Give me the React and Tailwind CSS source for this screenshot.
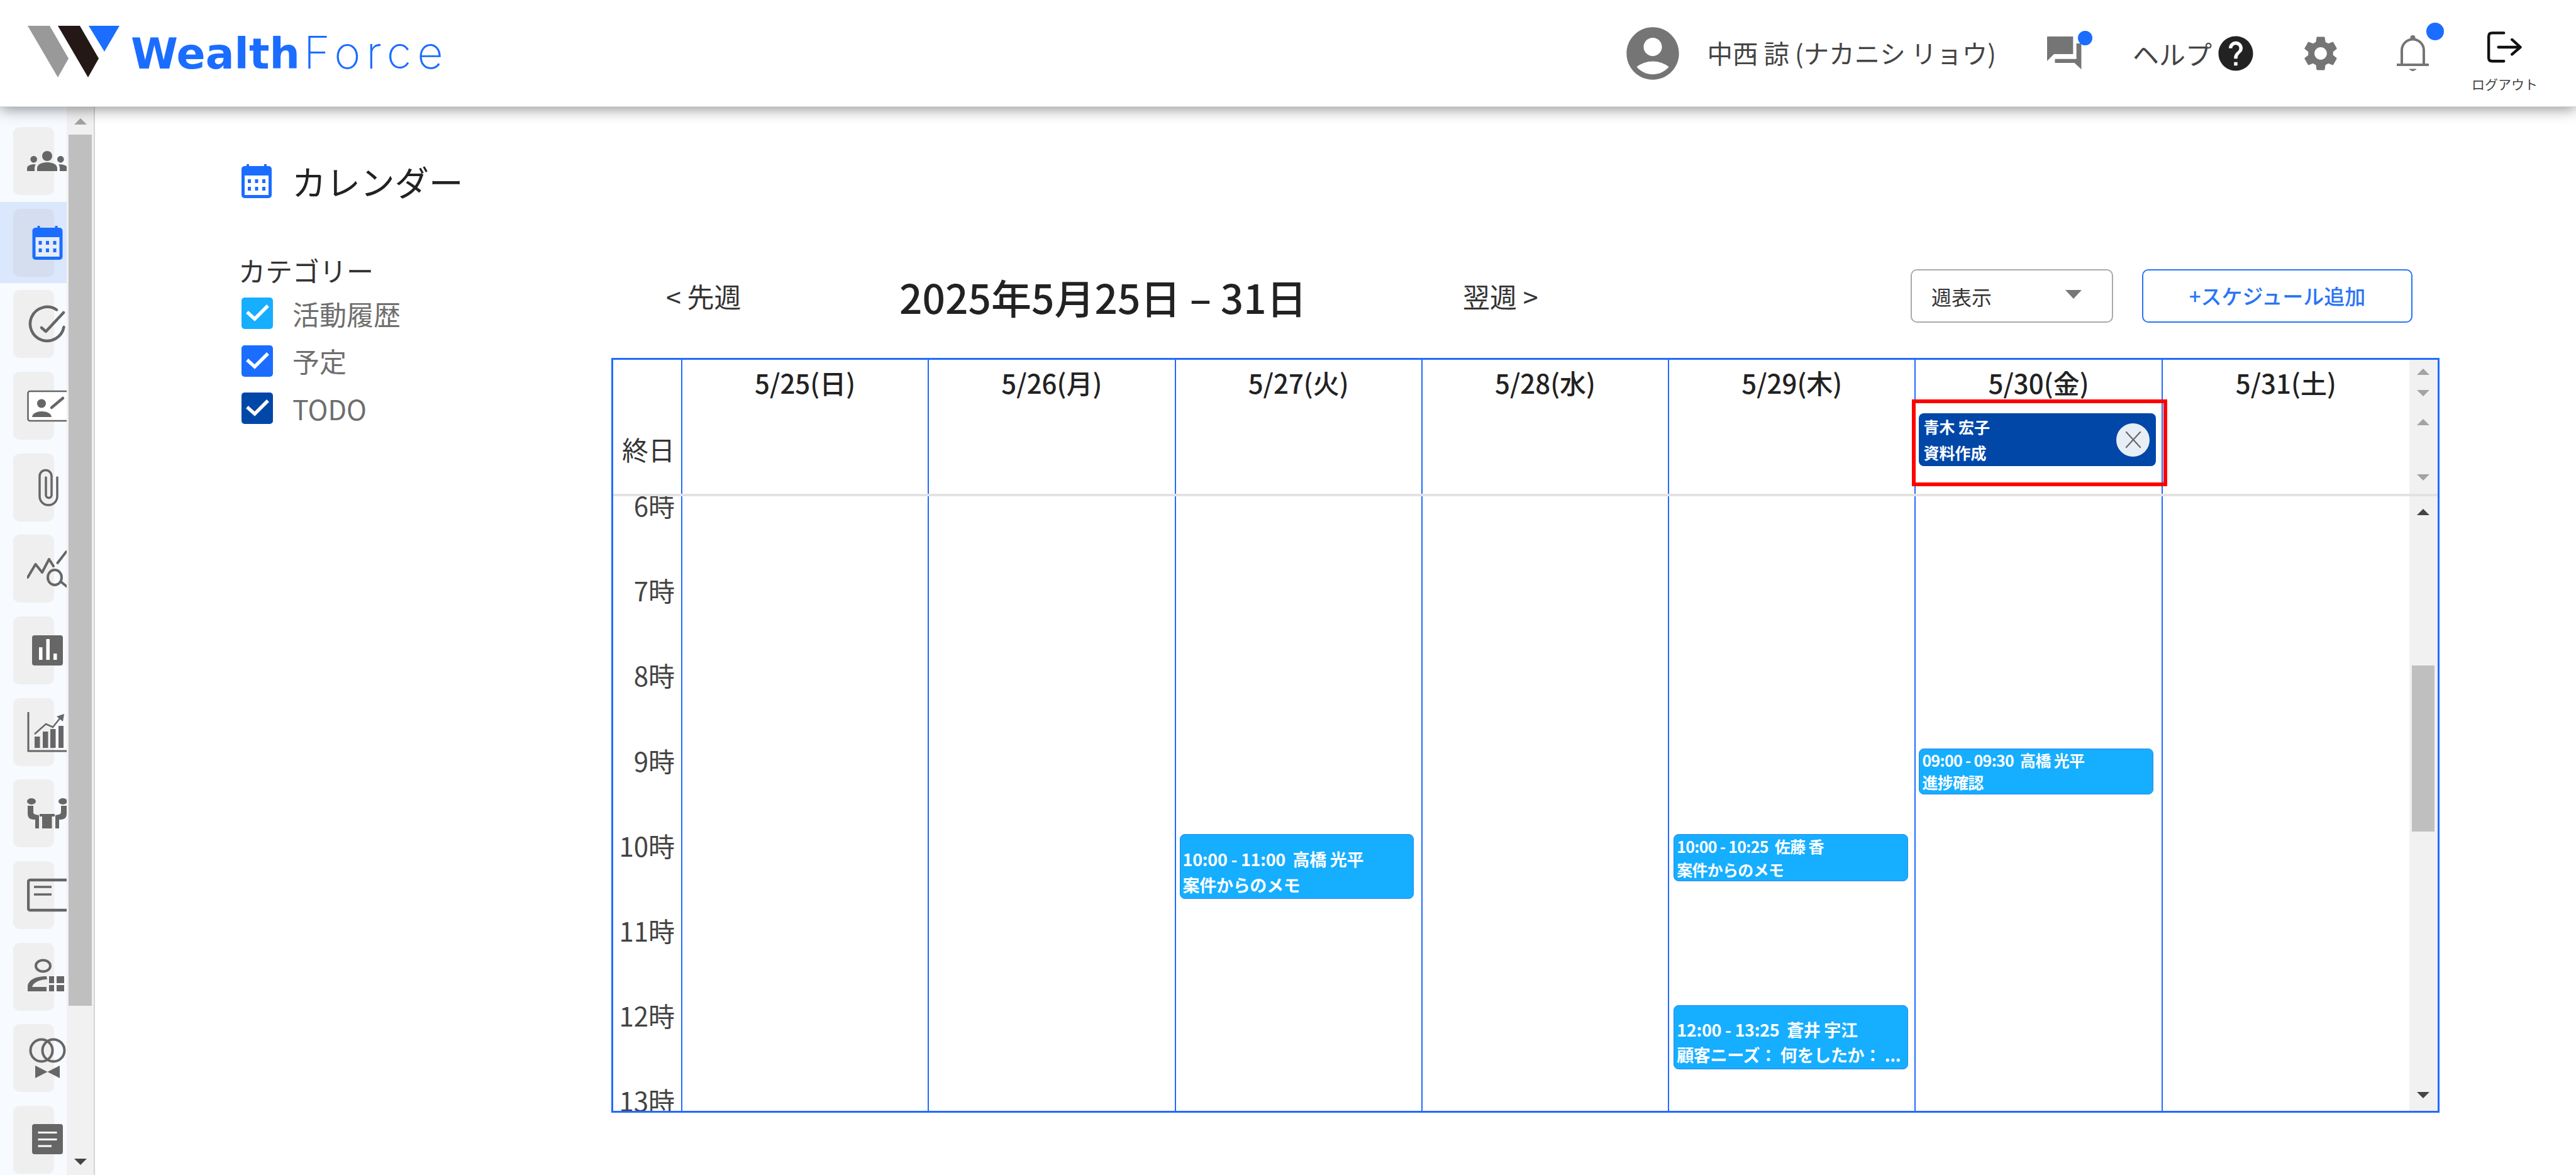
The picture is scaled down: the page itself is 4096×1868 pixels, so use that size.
import { MdAccountCircle, MdSettings, MdHelp, MdGroups } from "react-icons/md";

const jp = { fontFamily: '"Noto Sans CJK JP", "Noto Sans", sans-serif' };

function Arrow({ down, color = "#a3a3a3" }) {
  return (
    <svg viewBox="0 0 20 10" className="w-[20px] h-[10px] shrink-0">
      <polygon points={down ? "0,0 20,0 10,10" : "10,0 20,10 0,10"} fill={color} />
    </svg>
  );
}

function CalendarIcon({ className, paper = "#fff" }) {
  const dots = [10, 21.5, 33];
  return (
    <svg viewBox="0 0 48 54" className={className}>
      <rect x="8" y="0" width="4" height="8" fill="#1a6dff" />
      <rect x="36" y="0" width="4" height="8" fill="#1a6dff" />
      <rect x="0" y="3" width="48" height="51" rx="5" fill="#1a6dff" />
      <rect x="5" y="18" width="38" height="31" fill={paper} />
      {dots.map((x) => (
        <g key={x} fill="#1a6dff">
          <rect x={x} y="24" width="5" height="6" />
          <rect x={x} y="36" width="5" height="6" />
        </g>
      ))}
    </svg>
  );
}

const gray = "#666666";

const navIcons = [
  <MdGroups key="a" className="w-[64px] h-[64px]" color={gray} />,
  <div key="b" className="w-[64px] h-[64px] pl-[8px] pt-[5px]">
    <CalendarIcon className="w-[49px] h-[54px]" paper="#e6ecf8" />
  </div>,
  <svg key="c" viewBox="0 0 64 64" className="w-[64px] h-[64px]" fill="none" stroke={gray} strokeWidth="4.5" strokeLinecap="round" strokeLinejoin="round">
    <path d="M47 9.5 A27 27 0 1 0 58.5 37" />
    <path d="M23 38 L30 44 L58 14" />
  </svg>,
  <svg key="d" viewBox="0 0 64 64" className="w-[64px] h-[64px]">
    <rect x="1.5" y="9" width="70" height="47" rx="3" fill="#fff" stroke={gray} strokeWidth="2.5" />
    <circle cx="23" cy="28.5" r="7" fill={gray} />
    <path d="M8 50 C9 38 38 38 39 50 Z" fill={gray} />
    <path d="M39 35 L57 20" stroke={gray} strokeWidth="4.5" strokeLinecap="round" />
  </svg>,
  <svg key="e" viewBox="0 0 64 64" className="w-[64px] h-[64px]" fill="none" stroke={gray} strokeWidth="3.5" strokeLinecap="round">
    <path d="M48 16 V46 A14 14 0 0 1 20 46 V14 A9.5 9.5 0 0 1 39 14 V44 A4.5 4.5 0 0 1 30 44 V16" />
  </svg>,
  <svg key="f" viewBox="0 0 64 64" className="w-[64px] h-[64px]" fill="none" stroke={gray} strokeWidth="4" strokeLinecap="round" strokeLinejoin="round">
    <path d="M1 46 L13.5 25 L24 38 L35 17 L42 28" />
    <path d="M48.5 23 L62.5 5" />
    <ellipse cx="44" cy="46" rx="11" ry="12" />
    <path d="M54 53 L64 61" />
  </svg>,
  <svg key="g" viewBox="0 0 64 64" className="w-[64px] h-[64px]">
    <rect x="8" y="8" width="49" height="48" rx="4" fill={gray} />
    <rect x="19" y="27" width="5.5" height="20" fill="#fff" />
    <rect x="30.5" y="14" width="5.5" height="33" fill="#fff" />
    <rect x="42" y="37" width="5.5" height="10" fill="#fff" />
  </svg>,
  <svg key="h" viewBox="0 0 64 64" className="w-[64px] h-[64px]">
    <path d="M2 0 V62 H64" fill="none" stroke={gray} strokeWidth="3" />
    <rect x="12" y="39" width="8.5" height="18" fill={gray} />
    <rect x="25" y="31" width="8.5" height="26" fill={gray} />
    <rect x="37" y="27" width="8.5" height="30" fill={gray} />
    <rect x="50" y="22" width="8" height="35" fill={gray} />
    <path d="M12 35 L30 19 L41 24 L53 9" fill="none" stroke={gray} strokeWidth="2.5" />
    <polygon points="47,7 59,3 57,15" fill={gray} />
  </svg>,
  <svg key="i" viewBox="0 0 64 64" className="w-[64px] h-[64px]" fill={gray}>
    <ellipse cx="7" cy="13" rx="7" ry="5" />
    <ellipse cx="57" cy="13" rx="7" ry="5" />
    <path d="M1 20 H10 V30 C10 34 14 34 19 35 V56 H13 V42 C5 42 1 40 1 32 Z" />
    <path d="M63 20 H54 V30 C54 34 50 34 45 35 V56 H51 V42 C59 42 63 40 63 32 Z" />
    <rect x="20" y="33" width="24" height="4" />
    <rect x="24" y="37" width="15.5" height="19" />
  </svg>,
  <svg key="j" viewBox="0 0 64 64" className="w-[64px] h-[64px]" fill="none" stroke={gray}>
    <rect x="2" y="8" width="66" height="48" rx="3" strokeWidth="4.5" />
    <path d="M11 19 H39 M11 31 H39" strokeWidth="3.5" />
  </svg>,
  <svg key="k" viewBox="0 0 64 64" className="w-[64px] h-[64px]">
    <ellipse cx="25.5" cy="14.5" rx="11.5" ry="9" fill="none" stroke={gray} strokeWidth="4" />
    <path d="M1 55 V46 C3 36 15 31 31 31 L32 36 C22 36 10 40 8 48 H31 V55 Z" fill={gray} />
    <rect x="35" y="31" width="8" height="11" fill={gray} />
    <rect x="47" y="31" width="12" height="11" fill={gray} />
    <rect x="35" y="45" width="8" height="10" fill={gray} />
    <rect x="47" y="45" width="12" height="10" fill={gray} />
  </svg>,
  <svg key="l" viewBox="0 0 64 64" className="w-[64px] h-[64px]">
    <g fill="none" stroke={gray} strokeWidth="4">
      <circle cx="23" cy="20" r="17.5" />
      <circle cx="42" cy="20" r="17.5" />
    </g>
    <polygon points="13,44 32.5,54 13,64" fill={gray} />
    <polygon points="52,44 32.5,54 52,64" fill={gray} />
  </svg>,
  <svg key="m" viewBox="0 0 64 64" className="w-[64px] h-[64px]">
    <rect x="8" y="7" width="49" height="48" rx="4" fill={gray} />
    <path d="M17.5 20.5 H47.5 M17.5 31.5 H47.5 M17.5 42 H39" stroke="#fff" strokeWidth="3" />
  </svg>,
];

const categories = [
  { label: "活動履歴", box: "bg-[#16aeff]" },
  { label: "予定", box: "bg-[#1a6dff]" },
  { label: "TODO", box: "bg-[#0047a8]" },
];

const days = ["5/25(日)", "5/26(月)", "5/27(火)", "5/28(水)", "5/29(木)", "5/30(金)", "5/31(土)"];
const hours = ["6時", "7時", "8時", "9時", "10時", "11時", "12時", "13時"];

const events = {
  "5/27(火)": [
    {
      title: "10:00 - 11:00  高橋 光平",
      body: "案件からのメモ",
      cls: "top-[537px] h-[103px] left-[6px] w-[372px] pt-[18px] text-[27px] leading-[41px] tracking-[-0.3px]",
    },
  ],
  "5/29(木)": [
    {
      title: "10:00 - 10:25  佐藤 香",
      body: "案件からのメモ",
      cls: "top-[537px] h-[75px] left-[7px] w-[373px] pt-0 text-[25px] leading-[37px] tracking-[-0.7px]",
    },
    {
      title: "12:00 - 13:25  蒼井 宇江",
      body: "顧客ニーズ： 何をしたか： ...",
      cls: "top-[809px] h-[102px] left-[7px] w-[373px] pt-[18px] text-[27px] leading-[40px] tracking-[-0.3px]",
    },
  ],
  "5/30(金)": [
    {
      title: "09:00 - 09:30  高橋 光平",
      body: "進捗確認",
      cls: "top-[401px] h-[73px] left-[5px] w-[373px] pt-0 text-[25px] leading-[35px] tracking-[-0.7px]",
    },
  ],
};

const gridCols = "grid grid-cols-[110px_repeat(7,1fr)_45px]";

function Header() {
  return (
    <header className="relative z-10 h-[170px] bg-white flex items-center shadow-[0_3px_22px_rgba(0,0,0,0.45)] border-b border-[#d8d8d8]">
      <svg viewBox="0 0 146 82" className="ml-[44px] w-[146px] h-[82px] shrink-0 -mt-[6px]">
        <polygon points="0,0 35,0 65,52 48,82" fill="#999999" />
        <polygon points="48,0 83,0 113,52 96,82" fill="#231815" />
        <polygon points="97,0 146,0 122,41" fill="#1a6dff" />
      </svg>
      <div className="ml-[18px] flex items-baseline text-[#1a6dff] leading-none -mt-[2px] whitespace-nowrap">
        <span className="text-[68px] font-bold" style={{ fontFamily: '"DejaVu Sans", sans-serif' }}>Wealth</span>
        <span className="ml-[6px] text-[72px] font-extralight tracking-[9px]" style={{ fontFamily: "Inter, sans-serif" }}>Force</span>
      </div>

      <div className="ml-auto flex items-center h-full pr-[61px] text-[#444]" style={jp}>
        <MdAccountCircle color="#757575" className="w-[100px] h-[100px] -m-[8.5px] shrink-0" />
        <span className="ml-[45px] text-[40.5px] whitespace-nowrap">中西 諒 (ナカニシ リョウ)</span>
        <div className="relative ml-[81px] w-[56px] h-[53px]">
          <svg viewBox="80 90 180 170" className="w-[56px] h-[53px]" fill="#757575">
            <path d="M80 90 H213 V180 H115 L80 215Z" />
            <path d="M230 125 H255 V258 L220 225 H120 V205 H230Z" />
          </svg>
          <span className="absolute -top-[9px] left-[49px] w-[23px] h-[23px] rounded-full bg-[#1a6dff]" />
        </div>
        <span className="ml-[80px] text-[42px]">ヘルプ</span>
        <MdHelp color="#222" className="ml-[5px] w-[66px] h-[66px] -my-[5px] shrink-0" />
        <MdSettings color="#757575" className="ml-[69px] w-[66px] h-[66px] -my-[5px] shrink-0" />
        <div className="relative ml-[88px] w-[51px] h-[57px]">
          <svg viewBox="0 0 51 57" className="w-[51px] h-[57px]" fill="none" stroke="#757575" strokeWidth="4">
            <path d="M8 46 V24 a17.5 17.5 0 0 1 35 0 V46" />
            <path d="M1 47 H50" strokeLinecap="round" />
            <circle cx="25.5" cy="4" r="2" />
            <polygon points="20,54 31,54 25.5,57" fill="#757575" strokeWidth="1" />
          </svg>
          <span className="absolute -top-[20px] left-[47px] w-[28px] h-[28px] rounded-full bg-[#1a6dff]" />
        </div>
        <div className="ml-[68px] w-[105px] self-start pt-[50px] flex flex-col items-center">
          <svg viewBox="565 96 178 160" className="w-[55px] h-[50px]" fill="none" stroke="#111" strokeWidth="14" strokeLinecap="round" strokeLinejoin="round">
            <path d="M650 103 H590 Q572 103 572 120 V232 Q572 248 590 248 H650" />
            <path d="M622 176 H735 M692 137 L735 176 L692 213" />
          </svg>
          <span className="mt-[18px] text-[21px] leading-[30px] whitespace-nowrap">ログアウト</span>
        </div>
      </div>
    </header>
  );
}

function SideNav() {
  return (
    <nav className="flex h-full shrink-0">
      <div className="w-[106px] h-full bg-[#f7faff] overflow-hidden pt-[21px]">
        {navIcons.map((icon, i) => (
          <div key={i} className={i === 1 ? "h-[129.7px] flex items-center bg-[#dbe7fd]" : "h-[129.7px] flex items-center"}>
            <div className={i === 1 ? "ml-[21px] w-[65px] h-[108px] shrink-0 rounded-[10px] bg-[#d5deef] flex items-center" : "ml-[21px] w-[65px] h-[108px] shrink-0 rounded-[10px] bg-[#efefef] flex items-center"}>
              <div className="ml-[22px] shrink-0">{icon}</div>
            </div>
          </div>
        ))}
      </div>
      <div className="w-[45px] h-full bg-[#f1f1f1] border-r-2 border-[#d4d4d4] flex flex-col items-center">
        <div className="mt-[18px]">
          <Arrow />
        </div>
        <div className="mt-[16px] w-[37px] h-[1385px] bg-[#bfbfbf] shrink-0" />
        <div className="mt-auto mb-[16px]">
          <Arrow down color="#444" />
        </div>
      </div>
    </nav>
  );
}

function Categories() {
  return (
    <div className="w-[588px] shrink-0">
      <div className="-ml-[5px] text-[43px] leading-[58px] text-[#333]">カテゴリー</div>
      <div className="mt-[15px] flex flex-col gap-[25.5px]">
        {categories.map((c) => (
          <div key={c.label} className="flex items-center h-[50px]">
            <div className={`w-[50px] h-[50px] rounded-[5px] flex items-center justify-center ${c.box}`}>
              <svg viewBox="0 0 50 50" className="w-[50px] h-[50px]" fill="none" stroke="#fff" strokeWidth="5.5" strokeLinecap="square">
                <path d="M11 25 L21 34 L40 15" />
              </svg>
            </div>
            <span className="ml-[31px] text-[43px] text-[#6e6e6e]">{c.label}</span>
          </div>
        ))}
      </div>
    </div>
  );
}

function Toolbar() {
  return (
    <div className="mt-[28px] h-[85px] flex items-center text-[#333]">
      <span className="ml-[87px] w-[371px] text-[43px] whitespace-nowrap">&lt; 先週</span>
      <h1 className="w-[896px] text-[64px] font-medium whitespace-nowrap text-[#222]">2025年5月25日 – 31日</h1>
      <span className="text-[43px] whitespace-nowrap">翌週 &gt;</span>
      <div className="ml-auto mr-[43px] flex gap-[46px]">
        <div className="w-[322px] h-[85px] rounded-[10px] border-2 border-[#aaa] flex items-center pl-[31px] pr-[48px]">
          <span className="text-[32px]">週表示</span>
          <svg viewBox="0 0 26 14" className="ml-auto w-[26px] h-[14px] -mt-[6px]">
            <polygon points="0,0 26,0 13,14" fill="#777" />
          </svg>
        </div>
        <div className="w-[430px] h-[85px] rounded-[10px] border-2 border-[#2a75f5] flex items-center justify-center text-[33px] font-medium text-[#2a75f5]">
          +スケジュール追加
        </div>
      </div>
    </div>
  );
}

function Event({ ev }) {
  return (
    <div className={`absolute z-[1] rounded-[8px] bg-[#16aeff] border border-[#2a85f0] px-[4px] text-white font-bold whitespace-pre overflow-hidden ${ev.cls}`}>
      <div>{ev.title}</div>
      <div>{ev.body}</div>
    </div>
  );
}

function CalendarGrid() {
  return (
    <div className="mt-[56px] w-[2907px] h-[1200px] border-[3px] border-[#1f6bff] flex flex-col text-[#333]">
      <div className={`${gridCols} h-[213px]`}>
        <div className="border-r-2 border-[#1f6bff] flex items-end justify-end pr-[10px] pb-[50px] text-[42px] leading-[42px]">終日</div>
        {days.map((d, i) => (
          <div key={d} className={i < 6 ? "relative border-r-2 border-[#1f6bff] pt-[15px] text-center text-[42px] leading-[42px] font-medium text-[#222]" : "relative pt-[15px] text-center text-[42px] leading-[42px] font-medium text-[#222]"}>
            {d}
            {i === 5 && (
              <>
                <div className="absolute left-[5px] top-[85px] w-[377px] h-[84px] rounded-[8px] bg-[#0047a8] flex items-center text-left pl-[7px] pr-[10px] text-white">
                  <div className="text-[25px] leading-[41px] font-bold">
                    <div>青木 宏子</div>
                    <div>資料作成</div>
                  </div>
                  <div className="ml-auto w-[53px] h-[53px] rounded-full bg-[#e8eef5] flex items-center justify-center">
                    <svg viewBox="0 0 30 30" className="w-[32px] h-[32px]" fill="none" stroke="#666" strokeWidth="2">
                      <path d="M4 3 L26 27 M26 3 L4 27" />
                    </svg>
                  </div>
                </div>
                <div className="absolute z-10 -left-[6px] top-[63px] w-[406px] h-[138px] border-[6px] border-[#ff0000]" />
              </>
            )}
          </div>
        ))}
        <div className="bg-[#f1f1f1] flex flex-col items-center">
          <div className="mt-[14px]"><Arrow /></div>
          <div className="mt-[24px]"><Arrow down /></div>
          <div className="mt-[36px]"><Arrow /></div>
          <div className="mt-[78px]"><Arrow down /></div>
        </div>
      </div>
      <div className="h-[4px] bg-[#e2e2e2]" />
      <div className={`${gridCols} flex-1 min-h-0 overflow-hidden`}>
        <div className="border-r-2 border-[#1f6bff] overflow-hidden pr-[10px] text-right text-[42px] leading-[42px] text-[#444]">
          <div className="-mt-[7px]">
            {hours.map((h) => (
              <div key={h} className="h-[135.2px]">{h}</div>
            ))}
          </div>
        </div>
        {days.map((d, i) => (
          <div key={d} className={i < 6 ? "relative border-r-2 border-[#1f6bff]" : "relative"}>
            {(events[d] || []).map((ev) => (
              <Event key={ev.title} ev={ev} />
            ))}
          </div>
        ))}
        <div className="bg-[#f1f1f1] flex flex-col items-center">
          <div className="mt-[20px]"><Arrow color="#444" /></div>
          <div className="mt-[239px] w-[36px] h-[264px] bg-[#bfbfbf] shrink-0" />
          <div className="mt-auto mb-[20px]"><Arrow down color="#444" /></div>
        </div>
      </div>
    </div>
  );
}

export default function App() {
  return (
    <div className="w-[4096px] h-[1868px] bg-white overflow-hidden flex flex-col" style={jp}>
      <Header />
      <div className="flex flex-1 min-h-0">
        <SideNav />
        <main className="flex-1 pl-[233px] pt-[90px]">
          <div className="flex items-center h-[56px]">
            <CalendarIcon className="w-[48px] h-[54px]" />
            <span className="ml-[32px] text-[54.5px] leading-none text-[#222]">カレンダー</span>
          </div>
          <div className="mt-[84px] flex">
            <Categories />
            <div className="w-[2907px] shrink-0">
              <Toolbar />
              <CalendarGrid />
            </div>
          </div>
        </main>
      </div>
    </div>
  );
}
